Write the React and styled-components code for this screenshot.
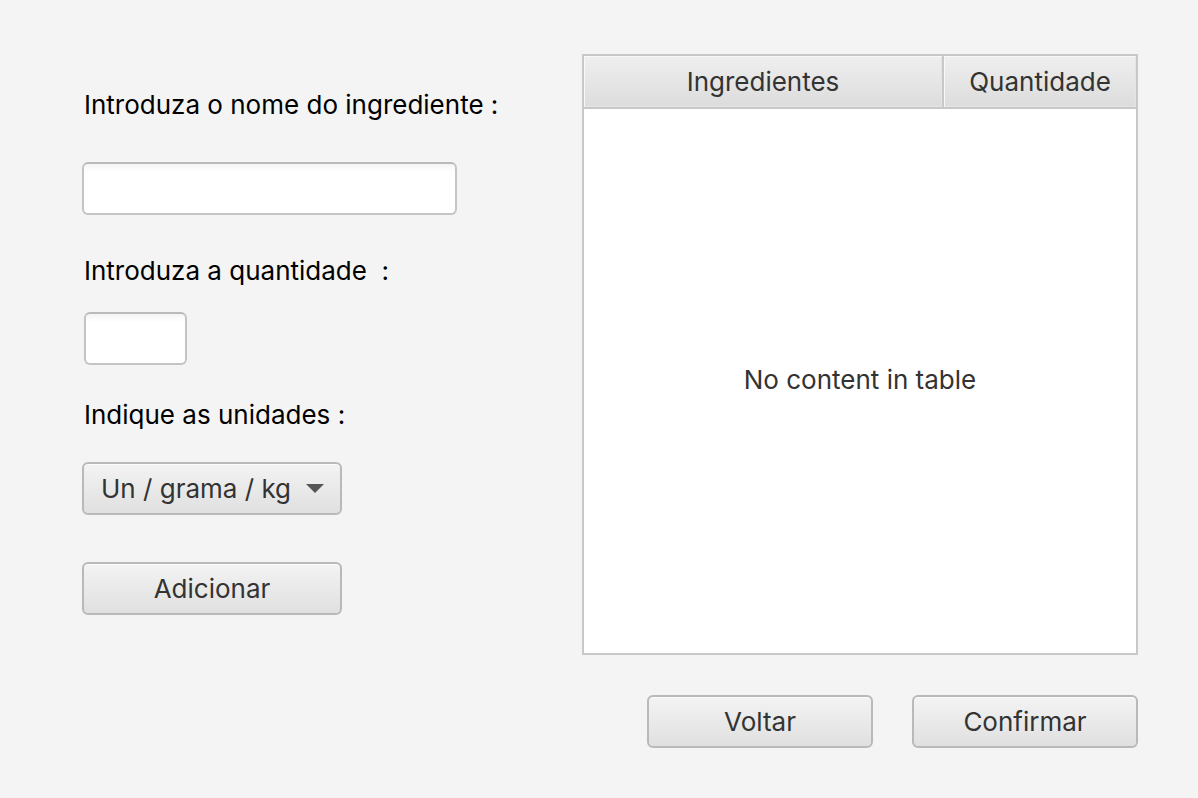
import React from 'react'
import { styled, createGlobalStyle } from 'styled-components'

const GlobalStyle = createGlobalStyle`
  html, body {
    margin: 0;
    padding: 0;
    background: #f4f4f4;
  }
  body {
    font-family: Inter, "Liberation Sans", sans-serif;
  }
`

const App = () => {
  return (
    <>
      <GlobalStyle />
      <Page>
        <Form>
          <Label>Introduza o nome do ingrediente :</Label>
          <TextField $width={375} $mt={42} />
          <Label $mt={41}>Introduza a quantidade&nbsp; :</Label>
          <TextField $width={103} $mt={26} $ml={2} />
          <Label $mt={35}>Indique as unidades :</Label>
          <Combo $mt={32}>
            <span>Un / grama / kg</span>
            <Arrow />
          </Combo>
          <Button $width={260} $mt={47}>Adicionar</Button>
        </Form>

        <RightSide>
          <Table>
            <Header>
              <HeadCell>Ingredientes</HeadCell>
              <HeadCell $last>Quantidade</HeadCell>
            </Header>
            <Body>No content in table</Body>
          </Table>
          <Actions>
            <Button $width={226}>Voltar</Button>
            <Button $width={226}>Confirmar</Button>
          </Actions>
        </RightSide>
      </Page>
    </>
  )
}

export default App

const Page = styled.div`
  width: 1198px;
  height: 798px;
  box-sizing: border-box;
  padding: 54px 0 0 82px;
  display: flex;
  gap: 125px;
`

const Form = styled.div`
  width: 375px;
  display: flex;
  flex-direction: column;
  align-items: flex-start;
  padding-top: 36px;
`

const Label = styled.div`
  height: 30px;
  line-height: 30px;
  margin-top: ${p => p.$mt || 0}px;
  margin-left: 2px;
  font-size: 26px;
  color: #000;
  white-space: nowrap;
`

const TextField = styled.div`
  box-sizing: border-box;
  width: ${p => p.$width}px;
  height: 53px;
  margin-top: ${p => p.$mt || 0}px;
  margin-left: ${p => p.$ml || 0}px;
  border: 2px solid #c4c4c4;
  border-top-color: #bababa;
  border-radius: 6px;
  background: linear-gradient(#f4f4f4 0px, #ffffff 8px, #ffffff 100%);
`

const buttonLook = `
  box-sizing: border-box;
  height: 53px;
  border: 2px solid #b9b9b9;
  border-radius: 6px;
  background: linear-gradient(#f3f3f3, #e0e0e0);
  box-shadow: inset 0 1px 0 #fbfbfb;
  font-family: Inter, "Liberation Sans", sans-serif;
  font-size: 26px;
  color: #333;
`

const Combo = styled.div`
  ${buttonLook}
  width: 260px;
  margin-top: ${p => p.$mt || 0}px;
  display: flex;
  align-items: center;
  justify-content: space-between;
  padding: 0 16px 0 17px;
`

const Arrow = styled.span`
  width: 0;
  height: 0;
  border-left: 9px solid transparent;
  border-right: 9px solid transparent;
  border-top: 9px solid #555;
`

const Button = styled.button`
  ${buttonLook}
  width: ${p => p.$width}px;
  margin-top: ${p => p.$mt || 0}px;
  padding: 0;
  display: flex;
  align-items: center;
  justify-content: center;
`

const RightSide = styled.div`
  display: flex;
  flex-direction: column;
  width: 556px;
`

const Table = styled.div`
  box-sizing: border-box;
  width: 556px;
  height: 601px;
  border: 2px solid #c8c8c8;
  background: #fff;
  display: flex;
  flex-direction: column;
`

const Header = styled.div`
  display: grid;
  grid-template-columns: 360px 1fr;
  height: 51px;
  border-bottom: 2px solid #c8c8c8;
`

const HeadCell = styled.div`
  display: flex;
  align-items: center;
  justify-content: center;
  background: linear-gradient(#efefef, #dcdcdc);
  box-shadow: inset 1px 1px 0 #f8f8f8, inset -1px -1px 0 #e4e4e4;
  border-right: ${p => (p.$last ? 'none' : '2px solid #c8c8c8')};
  font-size: 26px;
  color: #333;
`

const Body = styled.div`
  flex: 1;
  display: flex;
  align-items: center;
  justify-content: center;
  padding-bottom: 3px;
  font-size: 26px;
  color: #333;
`

const Actions = styled.div`
  display: flex;
  justify-content: flex-end;
  gap: 39px;
  margin-top: 40px;
`
